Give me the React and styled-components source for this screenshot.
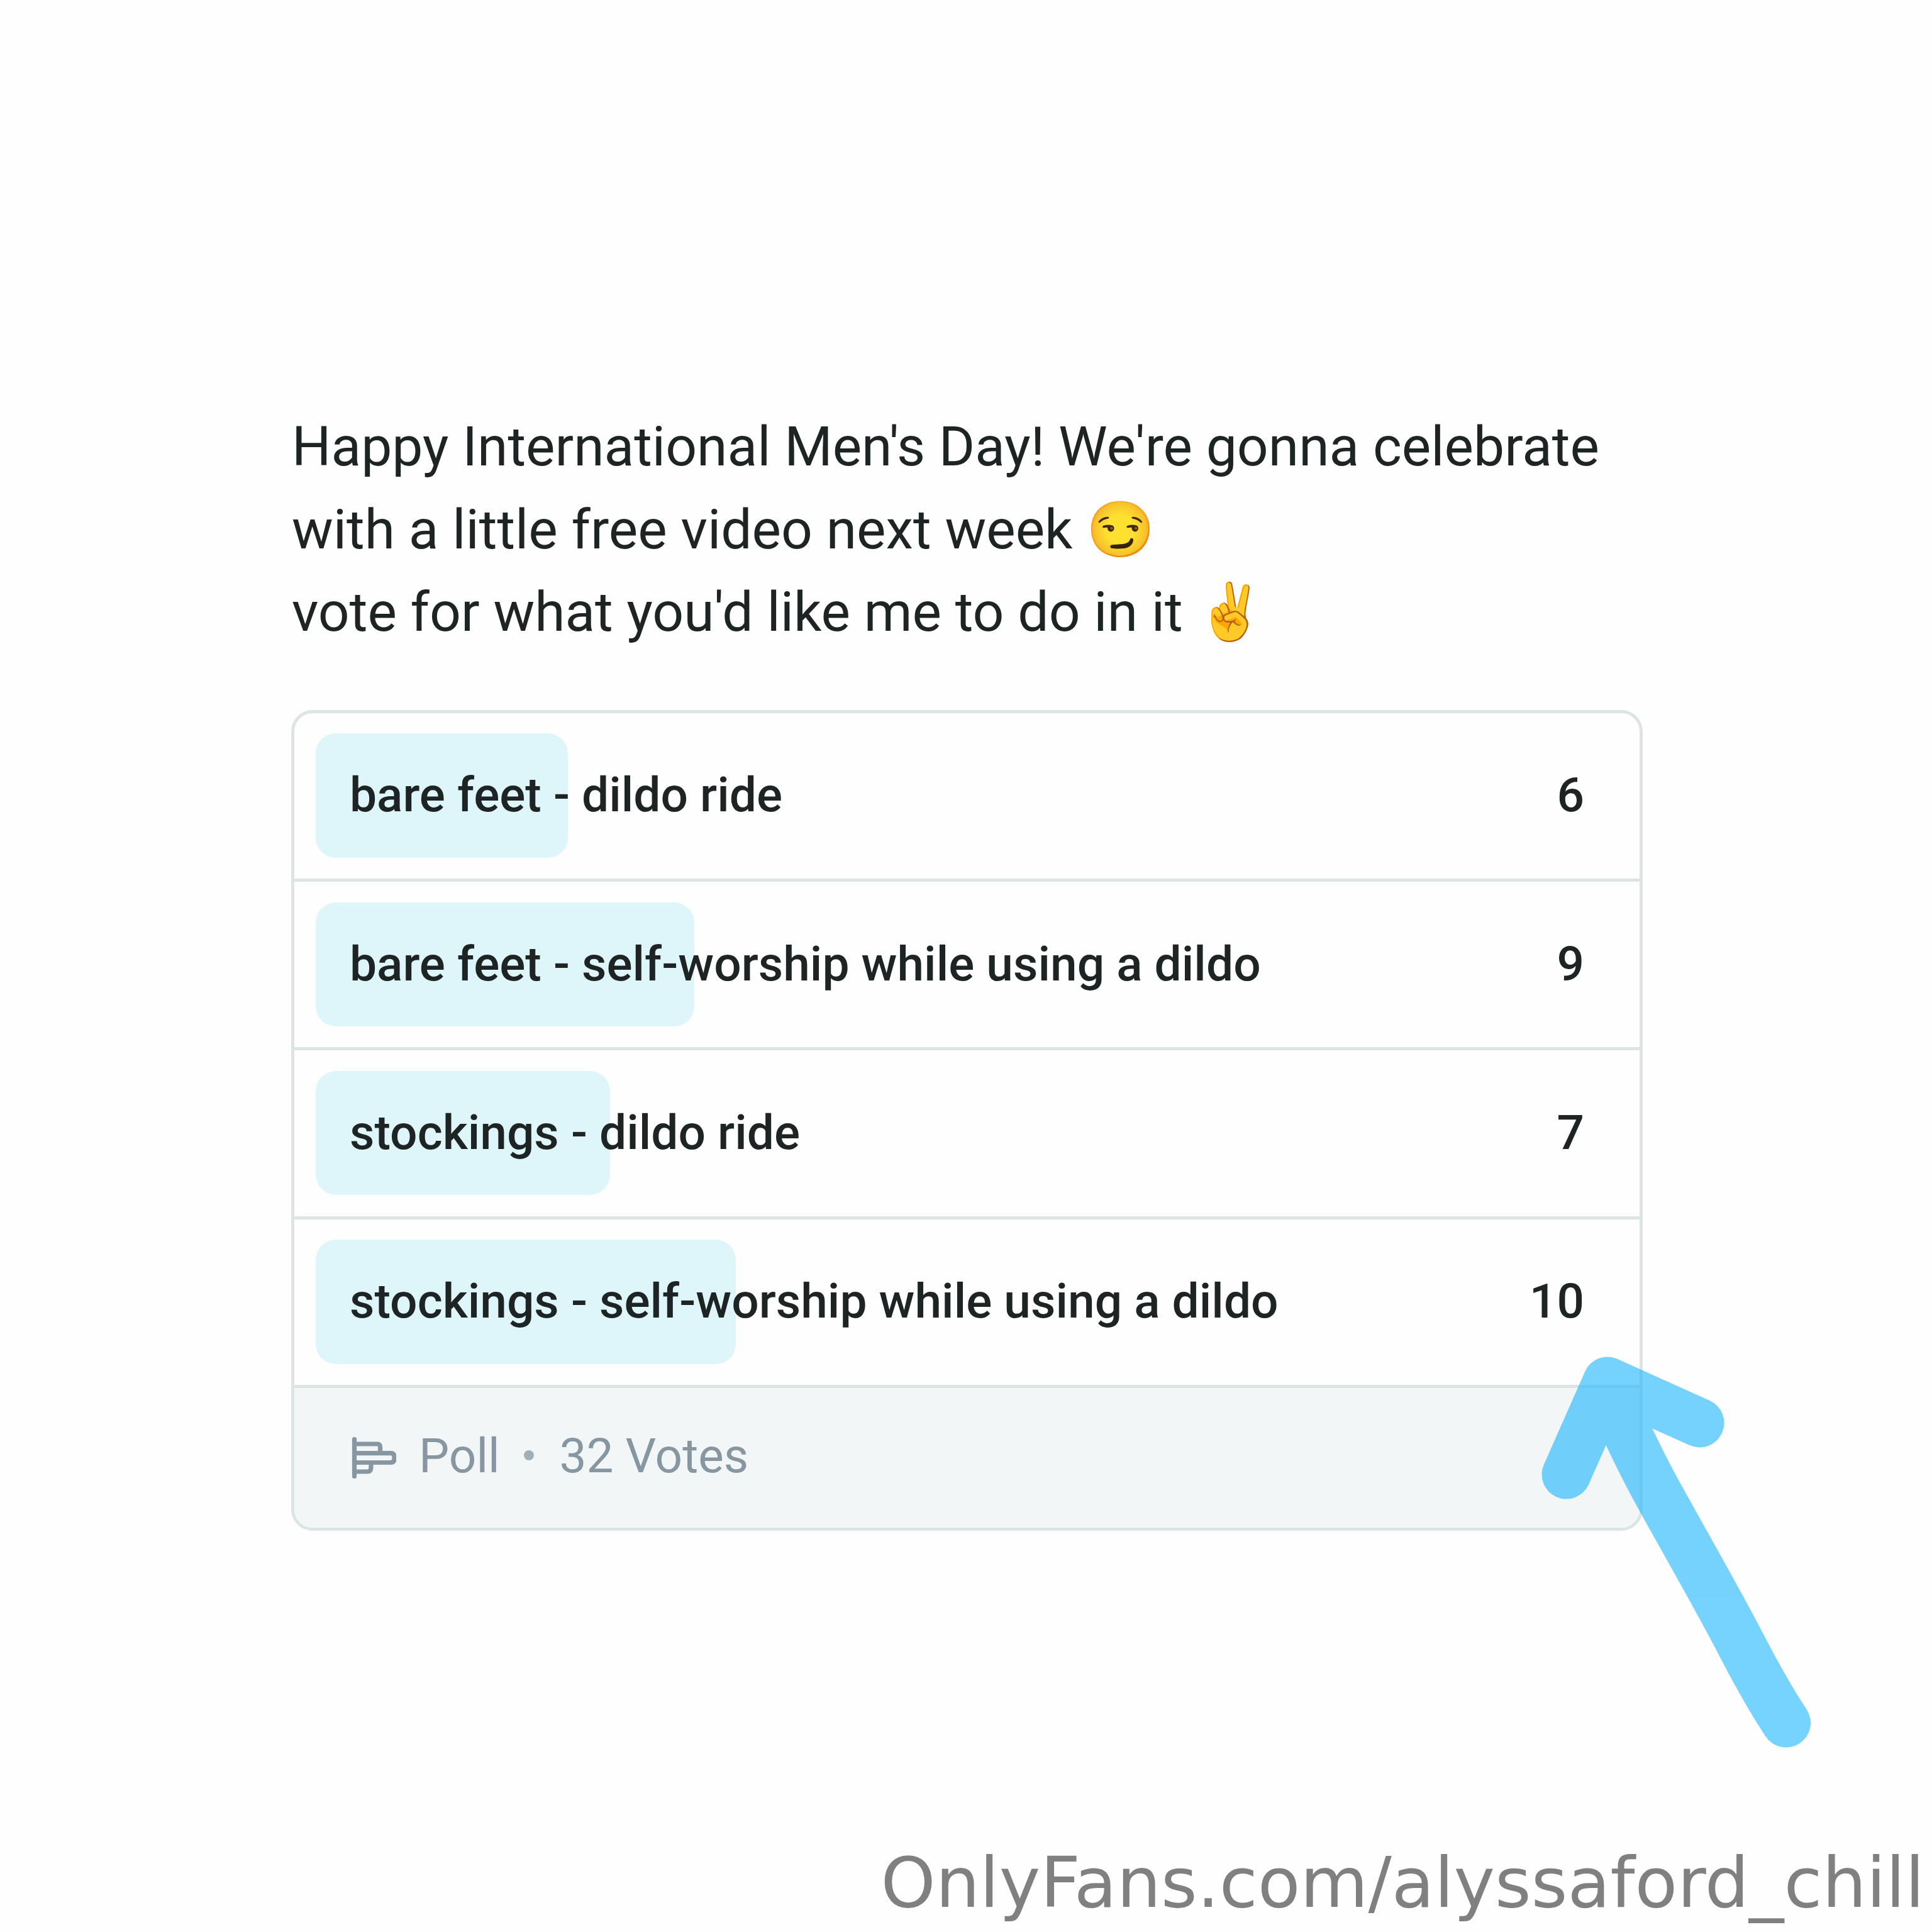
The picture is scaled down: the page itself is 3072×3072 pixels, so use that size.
import React from 'react';
import styled, { createGlobalStyle } from 'styled-components';


const GlobalStyle = createGlobalStyle`
  body {
    margin: 0;
    background: #fefefe;
  }
`;

const Page = styled.main`
  position: relative;
  box-sizing: border-box;
  display: flex;
  flex-direction: column;
  width: 3072px;
  height: 3072px;
  padding: 645px 460px 0 463px;
  overflow: hidden;
  font-family: Roboto, sans-serif;
  color: #1e2423;
`;

const PostText = styled.p`
  margin: 0;
  padding-left: 1px;
  font-size: 87.6px;
  line-height: 131.6px;
  white-space: pre-line;
`;

const PollCard = styled.section`
  box-sizing: border-box;
  width: 2149px;
  margin-top: 89px;
  border: 5px solid #dde5e4;
  border-radius: 34px;
  overflow: hidden;
`;

const Option = styled.div`
  position: relative;
  box-sizing: border-box;
  display: flex;
  align-items: center;
  justify-content: space-between;
  height: 268.3px;
  padding: 0 88px;
  border-bottom: 5px solid #dde5e4;
  font-size: 76.7px;
  font-weight: 500;
`;

const Bar = styled.div`
  position: absolute;
  top: 32.5px;
  left: 34px;
  height: 197.5px;
  border-radius: 32px;
  background: #def6fa;
`;

const Label = styled.span`
  position: relative;
  padding-bottom: 2px;
`;

const Footer = styled.footer`
  display: flex;
  align-items: center;
  height: 222px;
  padding-left: 90px;
  background: #f2f6f7;
  color: #8797a1;
  font-size: 76.5px;
`;

const FooterText = styled.span`
  padding-bottom: 6px;
`;

const Dot = styled.span`
  width: 16px;
  height: 16px;
  margin: 0 41px 8px 38px;
  border-radius: 50%;
  background: #a1afb7;
`;

const PollSvg = styled.svg`
  margin-right: 36px;
`;

const ArrowSvg = styled.svg`
  position: absolute;
  top: 0;
  left: 0;
`;

const Watermark = styled.div`
  position: absolute;
  right: 12px;
  bottom: 14px;
  font-family: 'DejaVu Sans', sans-serif;
  font-size: 110.8px;
  color: #808080;
  white-space: nowrap;
`;


const options = [
  { title: 'bare feet - dildo ride', votes: 6 },
  { title: 'bare feet - self-worship while using a dildo', votes: 9 },
  { title: 'stockings - dildo ride', votes: 7 },
  { title: 'stockings - self-worship while using a dildo', votes: 10 },
];

const PollIcon = () => (
  <PollSvg width="72" height="68" viewBox="0 0 72 68" fill="none" stroke="#8797a1" strokeWidth="7.2">
    <path d="M5.5 4.5V63.5" strokeLinecap="round" />
    <path d="M5.5 12H42Q46.5 12 46.5 17V27" />
    <path d="M5.5 26.7H63Q69 26.7 69 32.5V35.5Q69 41.5 63 41.5H5.5" />
    <path d="M5.5 56H26Q32 56 32 49V42" />
  </PollSvg>
);

const Arrow = () => (
  <ArrowSvg width="3072" height="3072" viewBox="0 0 3072 3072">
    <g fill="none" stroke="#1bb6fc" strokeWidth="78" strokeLinecap="round" strokeLinejoin="round" opacity="0.6">
      <path d="M2490.5 2344.5L2556 2196.5L2702.5 2262.5" />
      <path d="M2556 2197C2569 2240 2595 2297 2625 2354C2653 2407 2723 2527 2768 2614C2796 2668 2815 2702 2840 2739.5" />
    </g>
  </ArrowSvg>
);

class App extends React.Component {

  getTotal = () => options.reduce((sum, option) => sum + option.votes, 0);

  render() {
    const total = this.getTotal();

    return (
      <>
        <GlobalStyle />
        <Page>
          <PostText>
            {"Happy International Men's Day! We're gonna celebrate\nwith a little free video next week 😏\nvote for what you'd like me to do in it ✌️"}
          </PostText>
          <PollCard>
            {
              options.map((option) => (
                <Option key={option.title}>
                  <Bar style={{ width: `${(option.votes / total) * 100}%` }} />
                  <Label>{option.title}</Label>
                  <Label>{option.votes}</Label>
                </Option>
              ))
            }
            <Footer>
              <PollIcon />
              <FooterText>Poll</FooterText>
              <Dot />
              <FooterText>{total} Votes</FooterText>
            </Footer>
          </PollCard>
          <Arrow />
          <Watermark>OnlyFans.com/alyssaford_chill</Watermark>
        </Page>
      </>
    );
  }
}

export default App;
